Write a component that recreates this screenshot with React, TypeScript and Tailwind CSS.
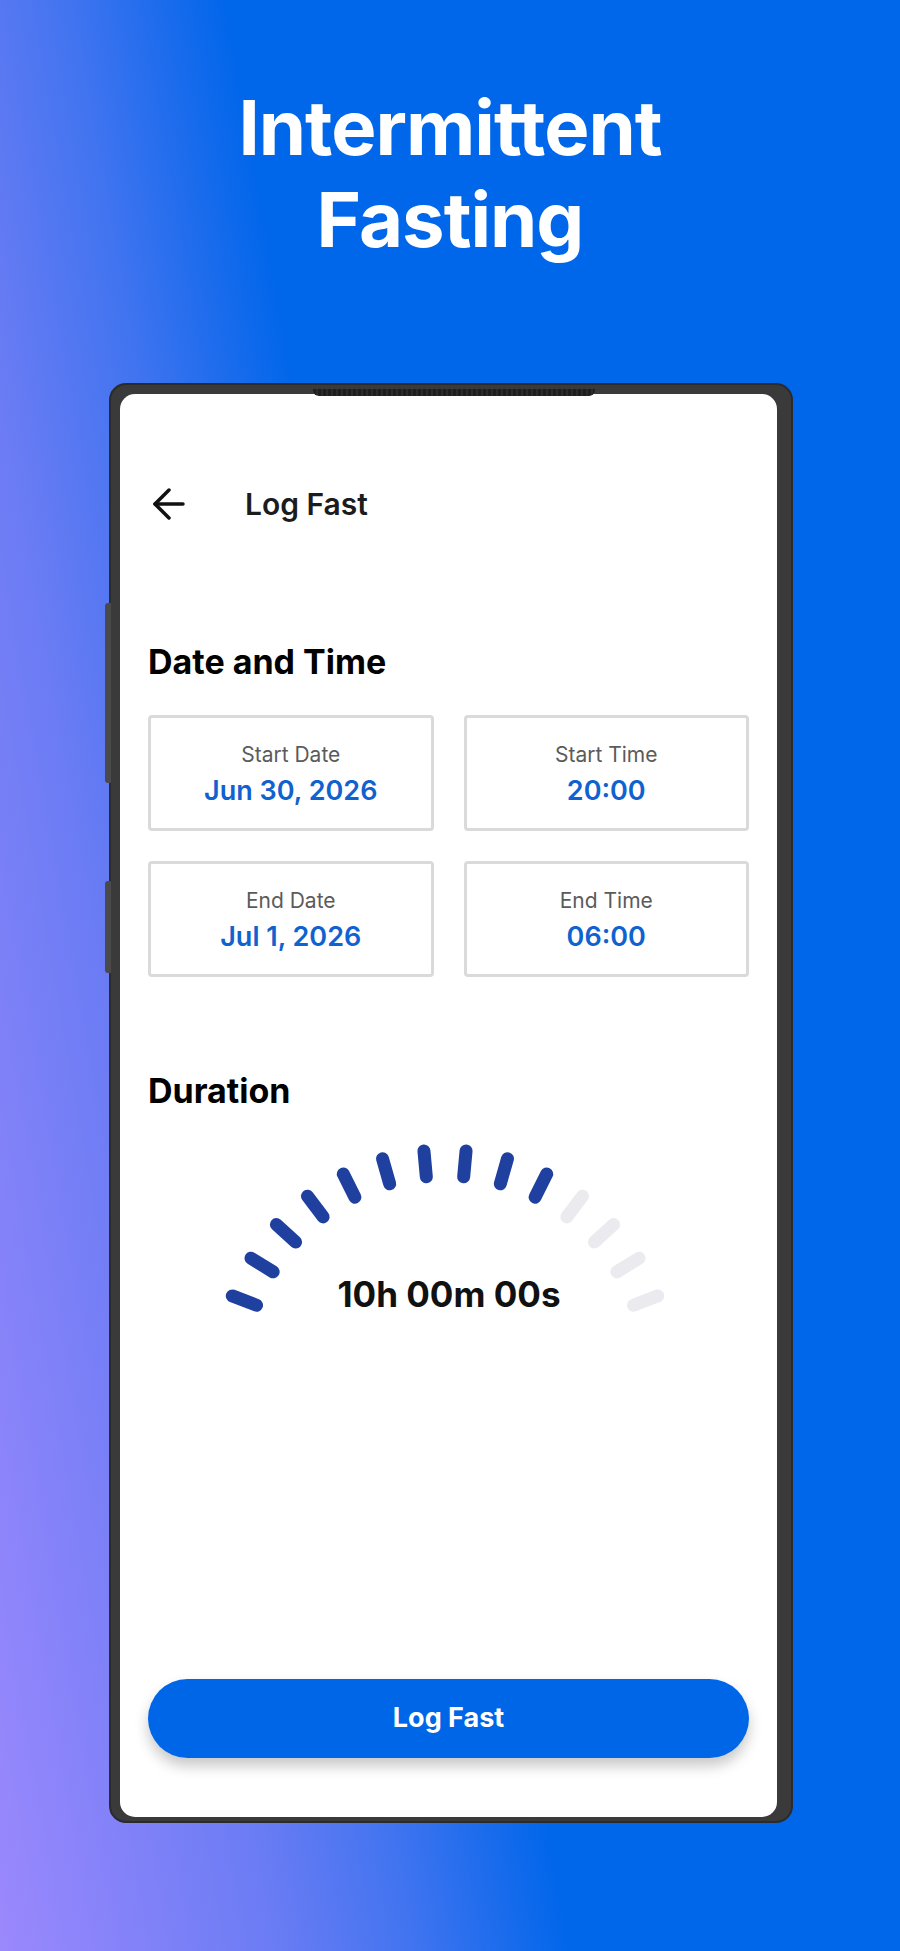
import { ArrowLeft } from 'lucide-react'

const Field = ({ label, value }: { label: string; value: string }) => (
    <div className="flex h-[116px] flex-col items-center rounded-[4px] border-[3px] border-[#dadada] bg-white pt-[25px]">
        <span className="text-[21px] leading-[24px] text-[#5b5b5b]">{label}</span>
        <span className="mt-[7px] text-[27px] font-semibold leading-[34px] text-[#0f62cf]">{value}</span>
    </div>
)

const Gauge = () => {
    const cx = 297
    const cy = 248
    const ticks = Array.from({ length: 14 }, (_, i) => -68.9 + i * 10.6)
    return (
        <svg width="601" height="200" viewBox="0 0 601 200" className="mt-[19px] block">
            {ticks.map((deg, i) => {
                const a = (deg * Math.PI) / 180
                const r1 = 202
                const r2 = 228
                return (
                    <line
                        key={i}
                        x1={cx + r1 * Math.sin(a)}
                        y1={cy - r1 * Math.cos(a)}
                        x2={cx + r2 * Math.sin(a)}
                        y2={cy - r2 * Math.cos(a)}
                        stroke={i < 10 ? '#1f409e' : '#ebebef'}
                        strokeWidth={13}
                        strokeLinecap="round"
                    />
                )
            })}
            <text
                x="301"
                y="177"
                textAnchor="middle"
                fontFamily="Inter, sans-serif"
                fontWeight="700"
                fontSize="35"
                fill="#111111"
            >
                10h 00m 00s
            </text>
        </svg>
    )
}

const App = () => {
    return (
        <div className="min-h-[1951px] w-[900px] overflow-hidden bg-[linear-gradient(80deg,#9b88fd_0%,#6b7cf4_22%,#4274f0_33%,#0066ea_46%)] pt-[81px] font-['Inter',sans-serif]">
            <h1 className="text-center text-[76px] font-bold leading-[92px] tracking-[-1px] text-white">
                Intermittent
                <br />
                Fasting
            </h1>

            {/* phone */}
            <div className="relative ml-[109px] mt-[118px] w-[684px] rounded-[17px] border-2 border-[#2b2b2b] bg-[#3a3a3a] pb-[4px] pl-[9px] pr-[14px] pt-[9px]">
                <div className="absolute left-[-6px] top-[218px] h-[180px] w-[6px] rounded-l-[3px] bg-[#4a4a4a]" />
                <div className="absolute left-[-6px] top-[496px] h-[92px] w-[6px] rounded-l-[3px] bg-[#4a4a4a]" />
                <div className="absolute left-[202px] top-[4px] h-[7px] w-[282px] rounded-b-[6px] bg-[repeating-linear-gradient(90deg,#1e1e1e_0px,#1e1e1e_3px,#2c2c2c_3px,#2c2c2c_5px)]" />

                <div className="flex h-[1423px] flex-col rounded-[15px] bg-white">
                    <div className="mt-[82px] flex h-[56px] items-center pl-[25px]">
                        <ArrowLeft size={48} strokeWidth={1.75} color="#111111" />
                        <span className="ml-[52px] text-[30px] font-semibold leading-[56px] text-[#1c1c1c]">Log Fast</span>
                    </div>

                    <div className="px-[28px]">
                        <h2 className="mt-[110px] text-[34px] font-bold leading-[40px] text-black">Date and Time</h2>
                        <div className="mt-[33px] grid grid-cols-2 gap-[30px]">
                            <Field label="Start Date" value="Jun 30, 2026" />
                            <Field label="Start Time" value="20:00" />
                            <Field label="End Date" value="Jul 1, 2026" />
                            <Field label="End Time" value="06:00" />
                        </div>

                        <h2 className="mt-[94px] text-[34px] font-bold leading-[40px] text-black">Duration</h2>
                        <Gauge />
                    </div>

                    <div className="mt-auto mb-[59px] px-[28px]">
                        <button className="h-[79px] w-full rounded-full bg-[#0066e8] text-[27px] font-bold text-white shadow-[0_8px_14px_rgba(0,0,0,0.22)]">
                            Log Fast
                        </button>
                    </div>
                </div>
            </div>
        </div>
    )
}

export default App
